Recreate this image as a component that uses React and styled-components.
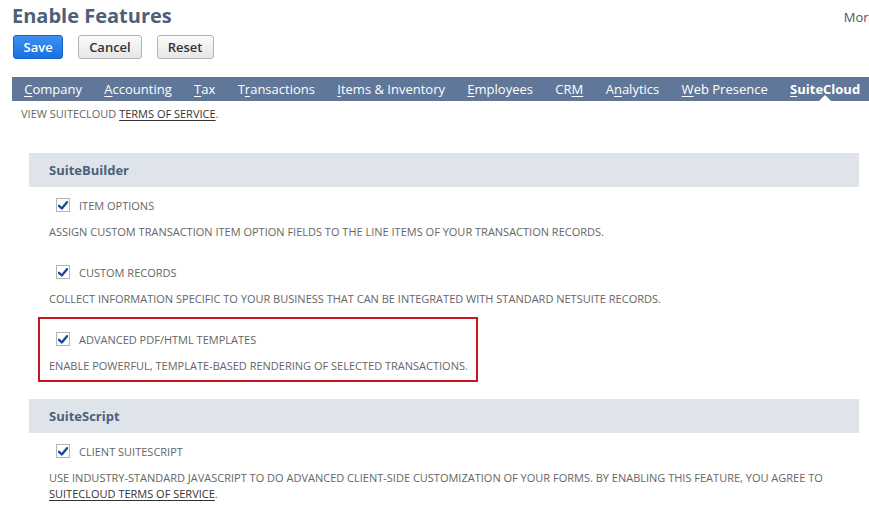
import styled, { createGlobalStyle } from "styled-components";

const GlobalStyle = createGlobalStyle`
  html, body {
    margin: 0;
    padding: 0;
    background: #fff;
    overflow: hidden;
  }
  body {
    font-family: "Open Sans", "Liberation Sans", sans-serif;
    color: #666;
  }
`;

const tabs = [
  { pre: "", key: "C", post: "ompany" },
  { pre: "", key: "A", post: "ccounting" },
  { pre: "", key: "T", post: "ax" },
  { pre: "T", key: "r", post: "ansactions" },
  { pre: "", key: "I", post: "tems & Inventory" },
  { pre: "", key: "E", post: "mployees" },
  { pre: "CR", key: "M", post: "" },
  { pre: "A", key: "n", post: "alytics" },
  { pre: "", key: "W", post: "eb Presence" },
  { pre: "", key: "S", post: "uiteCloud", active: true },
];

const CheckIcon = () => (
  <svg width="10" height="9" viewBox="0 0 10 9">
    <path d="M1 4.8 L3.8 7.4 L9 1.2" fill="none" stroke="#1f4a94" strokeWidth="2.4" strokeLinecap="round" strokeLinejoin="round" />
  </svg>
);

const Feature = ({ label, children, highlight }) => (
  <Item $highlight={highlight}>
    <Row>
      <Box>
        <CheckIcon />
      </Box>
      <Label>{label}</Label>
    </Row>
    <Desc>{children}</Desc>
  </Item>
);

export default function App() {
  return (
    <Page>
      <GlobalStyle />
      <Header>
        <Title>Enable Features</Title>
        <More>More</More>
      </Header>
      <Buttons>
        <Button $primary>Save</Button>
        <Button>Cancel</Button>
        <Button>Reset</Button>
      </Buttons>
      <Nav>
        {tabs.map((t) => (
          <Tab key={t.key + t.post} $active={t.active}>
            {t.pre}
            <u>{t.key}</u>
            {t.post}
          </Tab>
        ))}
      </Nav>
      <Notice>
        VIEW SUITECLOUD <Link>TERMS OF SERVICE</Link>.
      </Notice>

      <Section>
        <SectionHead>SuiteBuilder</SectionHead>
        <Feature label="ITEM OPTIONS">
          ASSIGN CUSTOM TRANSACTION ITEM OPTION FIELDS TO THE LINE ITEMS OF YOUR TRANSACTION RECORDS.
        </Feature>
        <Feature label="CUSTOM RECORDS">
          COLLECT INFORMATION SPECIFIC TO YOUR BUSINESS THAT CAN BE INTEGRATED WITH STANDARD NETSUITE RECORDS.
        </Feature>
        <Feature label="ADVANCED PDF/HTML TEMPLATES" highlight>
          ENABLE POWERFUL, TEMPLATE-BASED RENDERING OF SELECTED TRANSACTIONS.
        </Feature>
      </Section>

      <Section>
        <SectionHead>SuiteScript</SectionHead>
        <Feature label="CLIENT SUITESCRIPT">
          USE INDUSTRY-STANDARD JAVASCRIPT TO DO ADVANCED CLIENT-SIDE CUSTOMIZATION OF YOUR FORMS. BY ENABLING THIS FEATURE, YOU AGREE TO{" "}
          <Link>SUITECLOUD TERMS OF SERVICE</Link>.
        </Feature>
      </Section>
    </Page>
  );
}

const Page = styled.div`
  width: 890px;
  padding-top: 3px;
`;

const Header = styled.div`
  display: flex;
  justify-content: space-between;
  align-items: flex-start;
  padding: 0 14px 0 12px;
`;

const Title = styled.h1`
  margin: 0;
  font-size: 20px;
  line-height: 26px;
  font-weight: 700;
  color: #4d5f79;
`;

const More = styled.span`
  margin-top: 5px;
  font-size: 13px;
  color: #555;
`;

const Buttons = styled.div`
  display: flex;
  gap: 15px;
  padding-left: 13px;
  margin-top: 6px;
`;

const Button = styled.button`
  height: 24px;
  padding: 0 ${(p) => (p.$primary ? "9.5px" : "10px")};
  border-radius: 3px;
  font-family: "Open Sans", "Liberation Sans", sans-serif;
  font-size: 13px;
  font-weight: 600;
  cursor: pointer;
  border: 1px solid ${(p) => (p.$primary ? "#1463c9" : "#b4b4b4")};
  color: ${(p) => (p.$primary ? "#fff" : "#333")};
  background: ${(p) =>
    p.$primary
      ? "linear-gradient(#3d91f2, #1b6fe0)"
      : "linear-gradient(#fbfbfb, #e6e6e6)"};
`;

const Nav = styled.nav`
  display: flex;
  height: 24px;
  margin: 18px 0 0 12px;
  padding-left: 1px;
  background: #607799;
`;

const Tab = styled.span`
  position: relative;
  padding: 0 11.2px;
  font-size: 13px;
  line-height: 24px;
  color: #fff;
  white-space: nowrap;
  font-weight: ${(p) => (p.$active ? 700 : 400)};
  u {
    text-decoration-thickness: 1px;
    text-underline-offset: 2px;
  }
  ${(p) =>
    p.$active &&
    `
    &::after {
      content: "";
      position: absolute;
      left: 50%;
      bottom: 0;
      margin-left: -6px;
      border: 6px solid transparent;
      border-bottom-color: #fff;
      border-top: 0;
    }
  `}
`;

const Notice = styled.div`
  margin: 5px 0 0 21px;
  font-size: 11px;
  line-height: 16px;
  color: #666;
`;

const Link = styled.span`
  color: #333;
  text-decoration: underline;
  text-underline-offset: 2px;
`;

const Section = styled.section`
  width: 830px;
  margin: 31px 0 0 29px;
  & + & {
    margin-top: 11px;
  }
`;

const SectionHead = styled.div`
  height: 34px;
  padding-left: 20px;
  background: #dfe4eb;
  color: #4d5f79;
  font-size: 13px;
  font-weight: 700;
  line-height: 34px;
`;

const Item = styled.div`
  position: relative;
  padding: 9px 0 14px 20px;
  ${(p) =>
    p.$highlight &&
    `
    &::before {
      content: "";
      position: absolute;
      top: -4px;
      left: 9px;
      width: 436px;
      height: 61px;
      border: 2px solid #c8161d;
    }
  `}
`;

const Row = styled.div`
  display: flex;
  align-items: center;
  height: 18px;
  padding-left: 7px;
  gap: 9px;
`;

const Box = styled.span`
  display: flex;
  align-items: center;
  justify-content: center;
  width: 12px;
  height: 12px;
  border: 1px solid #b5b5b5;
  background: #fff;
`;

const Label = styled.span`
  font-size: 11px;
  color: #666;
`;

const Desc = styled.div`
  margin-top: 10px;
  font-size: 11px;
  line-height: 16px;
  color: #666;
  padding-right: 20px;
`;
